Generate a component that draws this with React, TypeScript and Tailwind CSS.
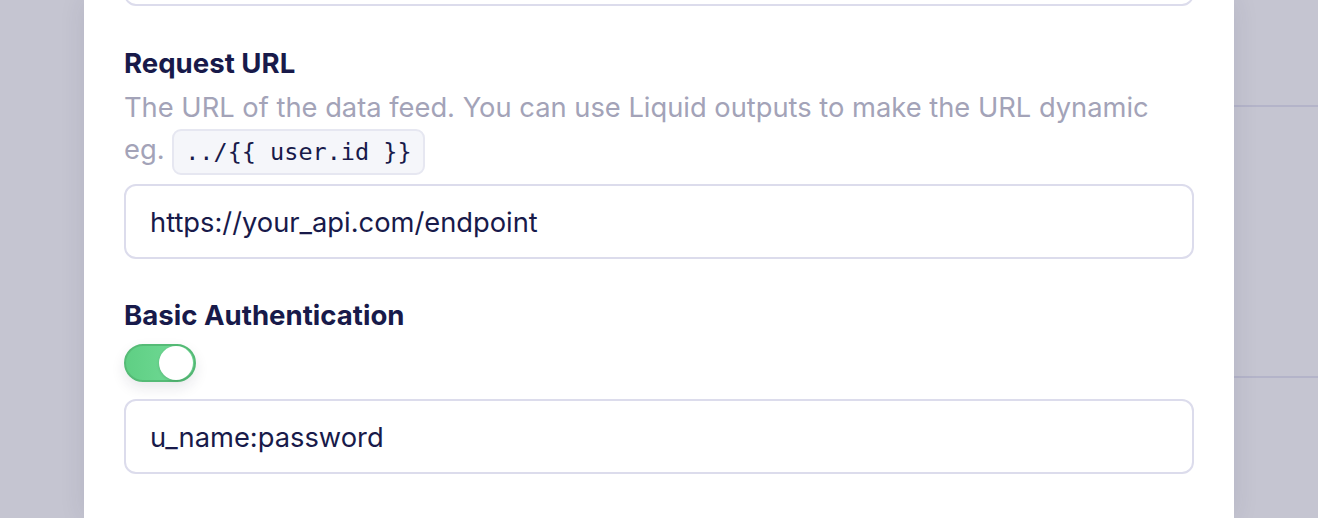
export default function App() {
  return (
    <div
      className="flex h-[518px] w-[1318px] overflow-hidden bg-[#c5c5d1]"
      style={{ fontFamily: "Inter, 'Noto Sans', sans-serif" }}
    >
      <div className="w-[84px] shrink-0 bg-[#c5c5d1]" />

      <div className="relative z-10 flex w-[1150px] shrink-0 flex-col bg-white px-[40px] shadow-[0_0_24px_rgba(40,40,80,0.10)]">
        {/* previous field, scrolled off the top */}
        <div className="-mt-[69px] h-[75px] shrink-0 rounded-[12px] border-2 border-[#dcdcec] bg-white" />

        <h3 className="mt-[41px] text-[27.6px] leading-[32px] font-bold text-[#181a4a]">Request URL</h3>
        <p className="mt-[8px] text-[27.3px] leading-[42px] text-[#a3a3b8]">
          The URL of the data feed. You can use Liquid outputs to make the URL dynamic
          <br />
          eg.{" "}
          <code
            className="inline-block rounded-[9px] border-2 border-[#e6e7f1] bg-[#f5f6fa] px-[11px] text-[23.5px] leading-[42px] text-[#181a4a] align-middle"
            style={{ fontFamily: "'DejaVu Sans Mono', monospace" }}
          >
            {"../{{ user.id }}"}
          </code>
        </p>

        <div className="mt-[9px] flex h-[75px] shrink-0 items-center rounded-[12px] border-2 border-[#dcdcec] px-[24px] pt-[3px] text-[27.3px] text-[#181a4a]">
          https://your_api.com/endpoint
        </div>

        <h3 className="mt-[40px] text-[27.6px] leading-[32px] font-bold text-[#181a4a]">Basic Authentication</h3>

        <div className="mt-[13px]">
          <div className="flex h-[38px] w-[72px] items-center justify-end rounded-full border-2 border-[#55bb76] bg-gradient-to-r from-[#5fcf84] to-[#74dc99] p-[1px] shadow-[0_6px_14px_rgba(30,30,60,0.10)]">
            <div className="h-[34px] w-[34px] rounded-full bg-white shadow-[0_1px_3px_rgba(0,0,0,0.15)]" />
          </div>
        </div>

        <div className="mt-[17px] flex h-[75px] shrink-0 items-center rounded-[12px] border-2 border-[#dcdcec] px-[24px] pt-[4px] text-[27.3px] text-[#181a4a]">
          u_name:password
        </div>
      </div>

      <div className="flex flex-1 flex-col bg-[#c5c5d1]">
        <div className="h-[107px] border-b-2 border-[#b4b4c9]" />
        <div className="h-[271px] border-b-2 border-[#b4b4c9]" />
        <div className="flex-1" />
      </div>
    </div>
  )
}
